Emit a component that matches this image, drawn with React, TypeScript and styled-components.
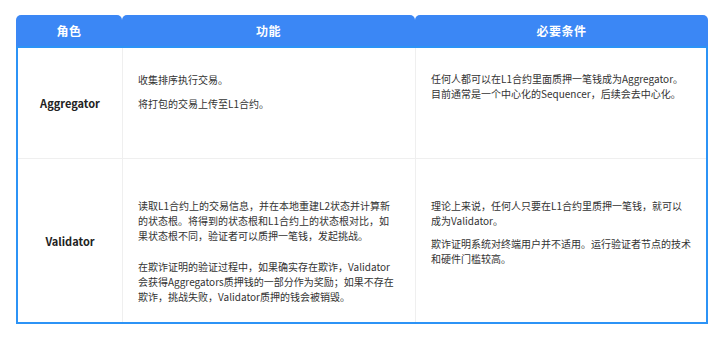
import React from 'react';
import styled, { createGlobalStyle } from 'styled-components';

const GlobalStyle = createGlobalStyle`
  html, body {
    margin: 0;
    padding: 0;
    background: #ffffff;
  }
  body {
    font-family: "Noto Sans CJK SC", "Noto Sans", sans-serif;
    color: #333333;
  }
`;

const Page = styled.div`
  padding: 15px 0 0 16px;
`;

const Table = styled.div`
  width: 692px;
`;

const HeaderRow = styled.div`
  display: grid;
  grid-template-columns: 106px 293px 1fr;
  height: 31px;
`;

const HeaderCell = styled.div`
  display: flex;
  align-items: center;
  justify-content: center;
  background: #3b87f5;
  border-radius: 5px 5px 0 0;
  color: #ffffff;
  font-size: 12px;
  font-weight: 700;
  letter-spacing: 0.5px;
`;

const Body = styled.div`
  border: 2px solid #2c93f6;
`;

const Row = styled.div<{ $height: number; $last?: boolean }>`
  display: grid;
  grid-template-columns: 104px 293px 1fr;
  height: ${({ $height }) => $height}px;
  border-bottom: ${({ $last }) => ($last ? 'none' : '1px solid #efefef')};
`;

const RoleCell = styled.div`
  display: flex;
  align-items: center;
  justify-content: center;
  font-size: 11px;
  font-weight: 700;
  color: #222222;
`;

const TextCell = styled.div<{ $padTop: number }>`
  border-left: 1px solid #efefef;
  padding: ${({ $padTop }) => $padTop}px 8px 0 15px;
  font-size: 10px;
  line-height: 15px;
  color: #333333;
  white-space: nowrap;
`;

const Para = styled.p<{ $gap?: number }>`
  margin: ${({ $gap }) => $gap ?? 0}px 0 0;
`;

export default function App() {
  return (
    <>
      <GlobalStyle />
      <Page>
        <Table>
          <HeaderRow>
            <HeaderCell>角色</HeaderCell>
            <HeaderCell>功能</HeaderCell>
            <HeaderCell>必要条件</HeaderCell>
          </HeaderRow>
          <Body>
            <Row $height={110}>
              <RoleCell>Aggregator</RoleCell>
              <TextCell $padTop={24}>
                <Para>收集排序执行交易。</Para>
                <Para $gap={9}>将打包的交易上传至L1合约。</Para>
              </TextCell>
              <TextCell $padTop={23}>
                <Para>
                  任何人都可以在L1合约里面质押一笔钱成为Aggregator。
                  <br />
                  目前通常是一个中心化的Sequencer，后续会去中心化。
                </Para>
              </TextCell>
            </Row>
            <Row $height={163} $last>
              <RoleCell>Validator</RoleCell>
              <TextCell $padTop={39}>
                <Para>
                  读取L1合约上的交易信息，并在本地重建L2状态并计算新
                  <br />
                  的状态根。将得到的状态根和L1合约上的状态根对比，如
                  <br />
                  果状态根不同，验证者可以质押一笔钱，发起挑战。
                </Para>
                <Para $gap={16}>
                  在欺诈证明的验证过程中，如果确实存在欺诈，Validator
                  <br />
                  会获得Aggregators质押钱的一部分作为奖励；如果不存在
                  <br />
                  欺诈，挑战失败，Validator质押的钱会被销毁。
                </Para>
              </TextCell>
              <TextCell $padTop={39}>
                <Para>
                  理论上来说，任何人只要在L1合约里质押一笔钱，就可以
                  <br />
                  成为Validator。
                </Para>
                <Para $gap={8}>
                  欺诈证明系统对终端用户并不适用。运行验证者节点的技术
                  <br />
                  和硬件门槛较高。
                </Para>
              </TextCell>
            </Row>
          </Body>
        </Table>
      </Page>
    </>
  );
}
